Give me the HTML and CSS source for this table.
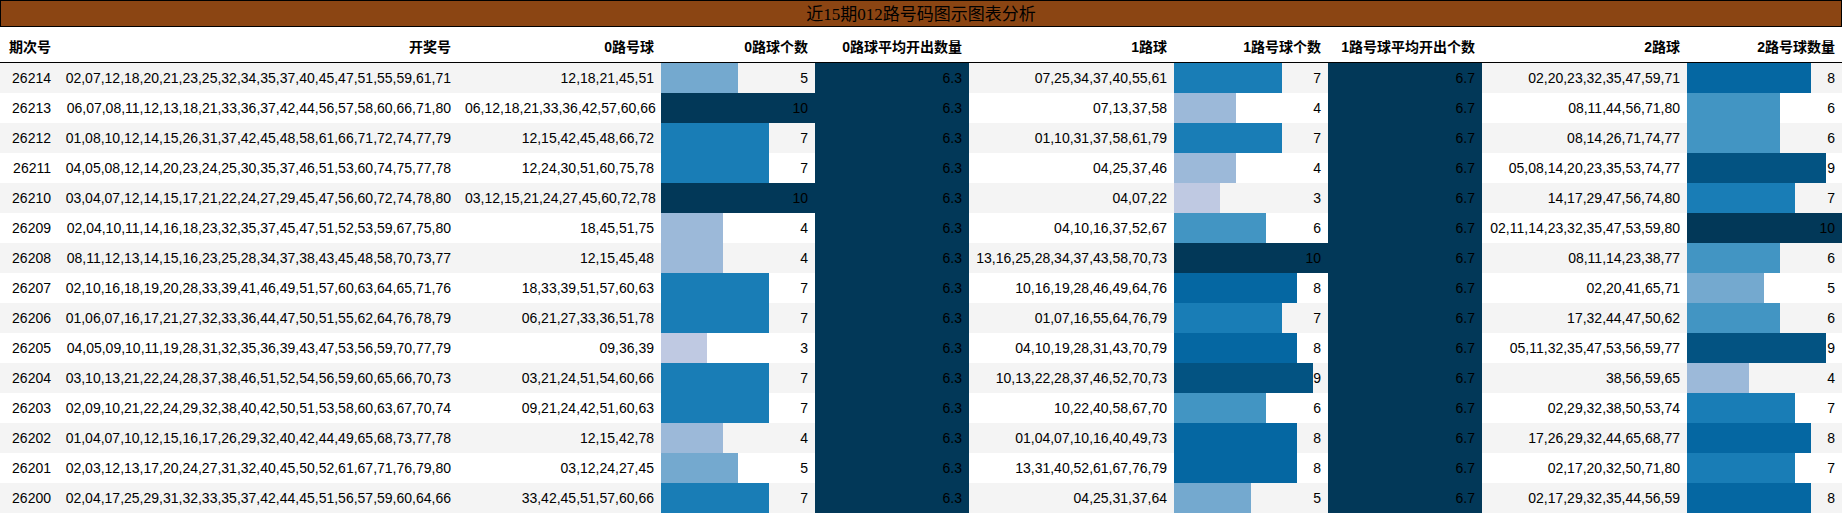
FILE: index.html
```
<!DOCTYPE html>
<html lang="zh">
<head>
<meta charset="utf-8">
<title>近15期012路号码图示图表分析</title>
<link rel="stylesheet" href="styles.css">
</head>
<body>
<div class="title">近15期012路号码图示图表分析</div>
<table class="grid">
<colgroup>
<col class="w-id"><col class="w-draw"><col class="w-list"><col class="w-bar"><col class="w-bar"><col class="w-list2"><col class="w-bar"><col class="w-bar"><col class="w-list2"><col class="w-last">
</colgroup>
<thead>
<tr>
<th>期次号</th><th>开奖号</th><th>0路号球</th><th>0路球个数</th><th>0路球平均开出数量</th><th>1路球</th><th>1路号球个数</th><th>1路号球平均开出个数</th><th>2路球</th><th>2路号球数量</th>
</tr>
</thead>
<tbody>
<tr><td>26214</td><td>02,07,12,18,20,21,23,25,32,34,35,37,40,45,47,51,55,59,61,71</td><td>12,18,21,45,51</td><td class="bar c5" style="--w:50%">5</td><td class="avg">6.3</td><td>07,25,34,37,40,55,61</td><td class="bar c7" style="--w:70%">7</td><td class="avg">6.7</td><td>02,20,23,32,35,47,59,71</td><td class="bar c8" style="--w:80%">8</td></tr>
<tr><td>26213</td><td>06,07,08,11,12,13,18,21,33,36,37,42,44,56,57,58,60,66,71,80</td><td>06,12,18,21,33,36,42,57,60,66</td><td class="bar c10" style="--w:100%">10</td><td class="avg">6.3</td><td>07,13,37,58</td><td class="bar c4" style="--w:40%">4</td><td class="avg">6.7</td><td>08,11,44,56,71,80</td><td class="bar c6" style="--w:60%">6</td></tr>
<tr><td>26212</td><td>01,08,10,12,14,15,26,31,37,42,45,48,58,61,66,71,72,74,77,79</td><td>12,15,42,45,48,66,72</td><td class="bar c7" style="--w:70%">7</td><td class="avg">6.3</td><td>01,10,31,37,58,61,79</td><td class="bar c7" style="--w:70%">7</td><td class="avg">6.7</td><td>08,14,26,71,74,77</td><td class="bar c6" style="--w:60%">6</td></tr>
<tr><td>26211</td><td>04,05,08,12,14,20,23,24,25,30,35,37,46,51,53,60,74,75,77,78</td><td>12,24,30,51,60,75,78</td><td class="bar c7" style="--w:70%">7</td><td class="avg">6.3</td><td>04,25,37,46</td><td class="bar c4" style="--w:40%">4</td><td class="avg">6.7</td><td>05,08,14,20,23,35,53,74,77</td><td class="bar c9" style="--w:90%">9</td></tr>
<tr><td>26210</td><td>03,04,07,12,14,15,17,21,22,24,27,29,45,47,56,60,72,74,78,80</td><td>03,12,15,21,24,27,45,60,72,78</td><td class="bar c10" style="--w:100%">10</td><td class="avg">6.3</td><td>04,07,22</td><td class="bar c3" style="--w:30%">3</td><td class="avg">6.7</td><td>14,17,29,47,56,74,80</td><td class="bar c7" style="--w:70%">7</td></tr>
<tr><td>26209</td><td>02,04,10,11,14,16,18,23,32,35,37,45,47,51,52,53,59,67,75,80</td><td>18,45,51,75</td><td class="bar c4" style="--w:40%">4</td><td class="avg">6.3</td><td>04,10,16,37,52,67</td><td class="bar c6" style="--w:60%">6</td><td class="avg">6.7</td><td>02,11,14,23,32,35,47,53,59,80</td><td class="bar c10" style="--w:100%">10</td></tr>
<tr><td>26208</td><td>08,11,12,13,14,15,16,23,25,28,34,37,38,43,45,48,58,70,73,77</td><td>12,15,45,48</td><td class="bar c4" style="--w:40%">4</td><td class="avg">6.3</td><td>13,16,25,28,34,37,43,58,70,73</td><td class="bar c10" style="--w:100%">10</td><td class="avg">6.7</td><td>08,11,14,23,38,77</td><td class="bar c6" style="--w:60%">6</td></tr>
<tr><td>26207</td><td>02,10,16,18,19,20,28,33,39,41,46,49,51,57,60,63,64,65,71,76</td><td>18,33,39,51,57,60,63</td><td class="bar c7" style="--w:70%">7</td><td class="avg">6.3</td><td>10,16,19,28,46,49,64,76</td><td class="bar c8" style="--w:80%">8</td><td class="avg">6.7</td><td>02,20,41,65,71</td><td class="bar c5" style="--w:50%">5</td></tr>
<tr><td>26206</td><td>01,06,07,16,17,21,27,32,33,36,44,47,50,51,55,62,64,76,78,79</td><td>06,21,27,33,36,51,78</td><td class="bar c7" style="--w:70%">7</td><td class="avg">6.3</td><td>01,07,16,55,64,76,79</td><td class="bar c7" style="--w:70%">7</td><td class="avg">6.7</td><td>17,32,44,47,50,62</td><td class="bar c6" style="--w:60%">6</td></tr>
<tr><td>26205</td><td>04,05,09,10,11,19,28,31,32,35,36,39,43,47,53,56,59,70,77,79</td><td>09,36,39</td><td class="bar c3" style="--w:30%">3</td><td class="avg">6.3</td><td>04,10,19,28,31,43,70,79</td><td class="bar c8" style="--w:80%">8</td><td class="avg">6.7</td><td>05,11,32,35,47,53,56,59,77</td><td class="bar c9" style="--w:90%">9</td></tr>
<tr><td>26204</td><td>03,10,13,21,22,24,28,37,38,46,51,52,54,56,59,60,65,66,70,73</td><td>03,21,24,51,54,60,66</td><td class="bar c7" style="--w:70%">7</td><td class="avg">6.3</td><td>10,13,22,28,37,46,52,70,73</td><td class="bar c9" style="--w:90%">9</td><td class="avg">6.7</td><td>38,56,59,65</td><td class="bar c4" style="--w:40%">4</td></tr>
<tr><td>26203</td><td>02,09,10,21,22,24,29,32,38,40,42,50,51,53,58,60,63,67,70,74</td><td>09,21,24,42,51,60,63</td><td class="bar c7" style="--w:70%">7</td><td class="avg">6.3</td><td>10,22,40,58,67,70</td><td class="bar c6" style="--w:60%">6</td><td class="avg">6.7</td><td>02,29,32,38,50,53,74</td><td class="bar c7" style="--w:70%">7</td></tr>
<tr><td>26202</td><td>01,04,07,10,12,15,16,17,26,29,32,40,42,44,49,65,68,73,77,78</td><td>12,15,42,78</td><td class="bar c4" style="--w:40%">4</td><td class="avg">6.3</td><td>01,04,07,10,16,40,49,73</td><td class="bar c8" style="--w:80%">8</td><td class="avg">6.7</td><td>17,26,29,32,44,65,68,77</td><td class="bar c8" style="--w:80%">8</td></tr>
<tr><td>26201</td><td>02,03,12,13,17,20,24,27,31,32,40,45,50,52,61,67,71,76,79,80</td><td>03,12,24,27,45</td><td class="bar c5" style="--w:50%">5</td><td class="avg">6.3</td><td>13,31,40,52,61,67,76,79</td><td class="bar c8" style="--w:80%">8</td><td class="avg">6.7</td><td>02,17,20,32,50,71,80</td><td class="bar c7" style="--w:70%">7</td></tr>
<tr><td>26200</td><td>02,04,17,25,29,31,32,33,35,37,42,44,45,51,56,57,59,60,64,66</td><td>33,42,45,51,57,60,66</td><td class="bar c7" style="--w:70%">7</td><td class="avg">6.3</td><td>04,25,31,37,64</td><td class="bar c5" style="--w:50%">5</td><td class="avg">6.7</td><td>02,17,29,32,35,44,56,59</td><td class="bar c8" style="--w:80%">8</td></tr>
</tbody>
</table>
</body>
</html>
```

FILE: styles.css
```
html, body {
  margin: 0;
  padding: 0;
  background: #ffffff;
}

body {
  width: 1842px;
  font-family: "Liberation Sans", "Noto Sans CJK SC", sans-serif;
  font-size: 14px;
  color: #000;
}

.title {
  box-sizing: border-box;
  height: 27px;
  line-height: 25px;
  border: 1px solid #000;
  background: #8b4513;
  color: #000;
  text-align: center;
  font-family: "Liberation Serif", "Noto Sans CJK SC", serif;
  font-size: 17px;
  padding-top: 1px;
}

.grid {
  width: 1842px;
  table-layout: fixed;
  border-collapse: separate;
  border-spacing: 0;
}

.w-id { width: 58px; }
.w-draw { width: 400px; }
.w-list { width: 203px; }
.w-list2 { width: 205px; }
.w-bar { width: 154px; }
.w-last { width: 155px; }

.grid th,
.grid td {
  padding: 0 7px;
  text-align: right;
  white-space: nowrap;
  overflow: visible;
}

.grid th {
  height: 36px;
  box-sizing: border-box;
  padding-top: 3px;
  font-weight: bold;
  border-bottom: 1px solid #000;
  vertical-align: middle;
}

.grid td {
  height: 30px;
  box-sizing: border-box;
  vertical-align: middle;
}

.grid tbody tr:nth-child(odd) {
  background: #f4f4f4;
}

.bar {
  background: linear-gradient(90deg, var(--c) var(--w), transparent var(--w));
}

.avg {
  background: #023858;
}

.c3 { --c: #bfc9e2; }
.c4 { --c: #9cb9d9; }
.c5 { --c: #74a9cf; }
.c6 { --c: #4295c3; }
.c7 { --c: #197db6; }
.c8 { --c: #0567a2; }
.c9 { --c: #035382; }
.c10 { --c: #023858; }
```
